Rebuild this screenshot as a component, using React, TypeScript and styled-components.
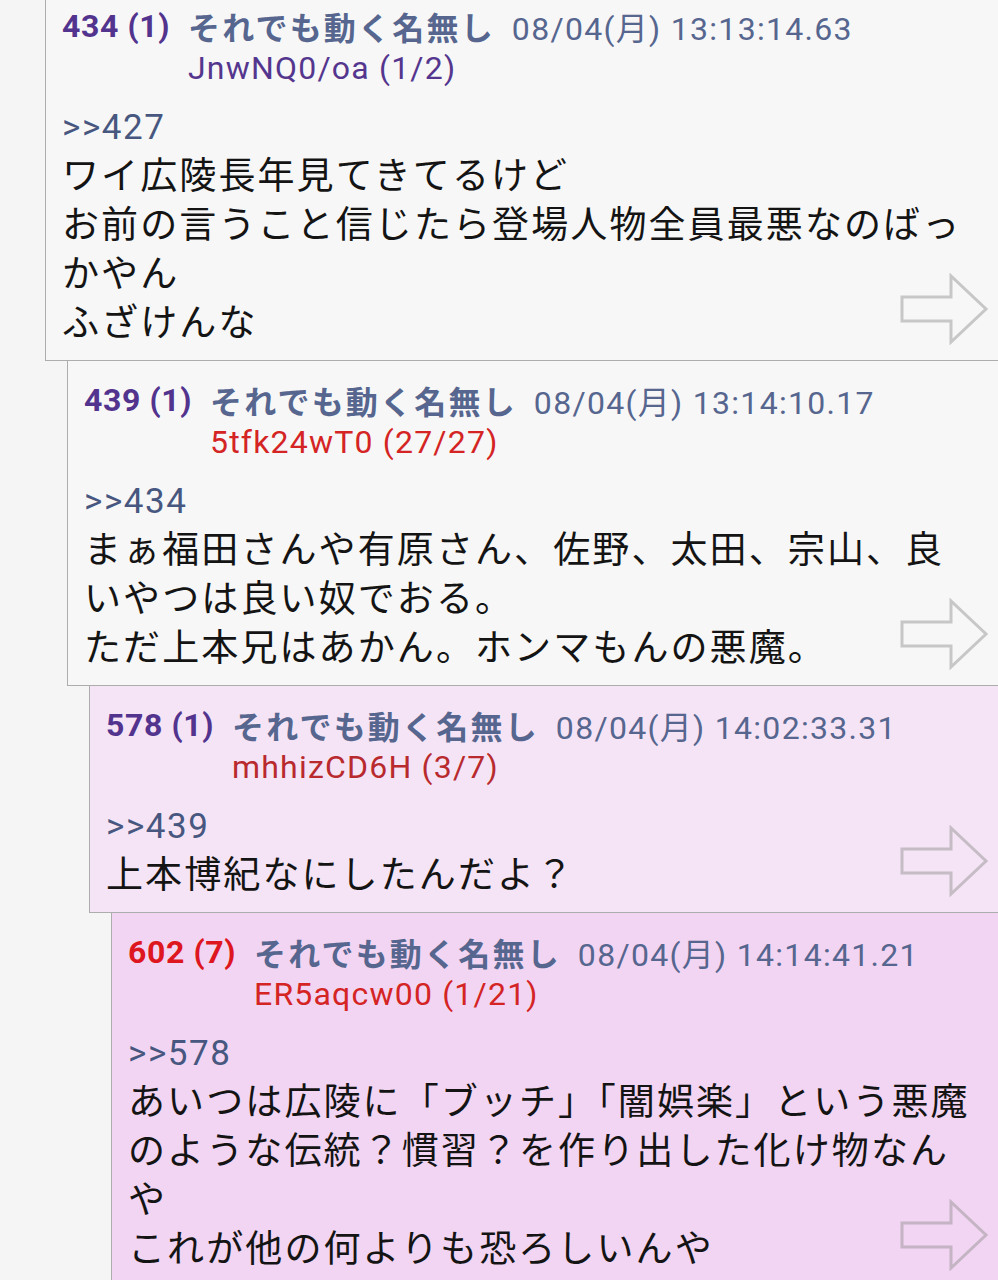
import React from "react";
import styled, { createGlobalStyle } from "styled-components";

const GlobalStyle = createGlobalStyle`
  html, body {
    margin: 0;
    padding: 0;
    background: #f5f5f5;
    overflow: hidden;
  }
  body {
    font-family: Roboto, "Noto Sans CJK JP", "Noto Sans", sans-serif;
  }
`;

const Thread = styled.main`
  display: flex;
  flex-direction: column;
  margin-top: -13px;
  width: 998px;
`;

const Post = styled.article<{ $depth: number; $bg: string }>`
  position: relative;
  margin-left: ${(p) => 45 + p.$depth * 22}px;
  background: ${(p) => p.$bg};
  border-left: 1px solid #adadad;
  border-bottom: 1px solid #adadad;
  padding: 18px 24px 12px 16px;
`;

const Header = styled.header`
  display: flex;
  align-items: flex-start;
  gap: 18px;
`;

const Number = styled.span<{ $color: string }>`
  font-family: Roboto, "Noto Sans CJK JP", sans-serif;
  font-weight: 700;
  font-size: 32px;
  letter-spacing: 0.6px;
  line-height: 42px;
  color: ${(p) => p.$color};
  white-space: nowrap;
`;

const Meta = styled.div`
  display: flex;
  flex-direction: column;
`;

const MetaLine = styled.div`
  display: flex;
  align-items: baseline;
  gap: 17px;
  height: 42px;
  line-height: 42px;
  white-space: nowrap;
`;

const Name = styled.span`
  font-family: "Noto Sans CJK JP", sans-serif;
  font-weight: 700;
  font-size: 32px;
  letter-spacing: 2.2px;
  color: #56668f;
`;

const DateText = styled.span`
  font-family: Roboto, "Noto Sans CJK JP", sans-serif;
  font-size: 32px;
  letter-spacing: 1.3px;
  color: #56668f;
`;

const Id = styled.span<{ $color: string }>`
  font-family: Roboto, sans-serif;
  font-size: 32px;
  letter-spacing: 1.2px;
  color: ${(p) => p.$color};
`;

const Body = styled.div`
  margin-top: 14px;
  display: flex;
  flex-direction: column;
`;

const Anchor = styled.div`
  font-family: Roboto, sans-serif;
  font-size: 35px;
  letter-spacing: 1.6px;
  line-height: 49px;
  color: #47577f;
`;

const Line = styled.div`
  font-family: Roboto, "Noto Sans CJK JP", sans-serif;
  font-size: 37px;
  letter-spacing: 2.1px;
  line-height: 49px;
  color: #141414;
  white-space: nowrap;
`;

const ArrowWrap = styled.div`
  position: absolute;
  right: 9px;
  bottom: 15px;
  width: 90px;
  height: 72px;
`;

const Arrow = () => (
  <ArrowWrap>
    <svg width="90" height="72" viewBox="0 0 90 72">
      <path
        d="M3 24 H52 V3 L87 36 L52 69 V48 H3 Z"
        fill="none"
        stroke="rgba(140,140,140,0.45)"
        strokeWidth="3"
        strokeLinejoin="miter"
      />
    </svg>
  </ArrowWrap>
);

type PostData = {
  no: string;
  noColor: string;
  date: string;
  id: string;
  idColor: string;
  anchor: string;
  lines: string[];
  bg: string;
};

const posts: PostData[] = [
  {
    no: "434 (1)",
    noColor: "#52338d",
    date: "08/04(月) 13:13:14.63",
    id: "JnwNQ0/oa (1/2)",
    idColor: "#55368e",
    anchor: ">>427",
    lines: [
      "ワイ広陵長年見てきてるけど",
      "お前の言うこと信じたら登場人物全員最悪なのばっ",
      "かやん",
      "ふざけんな",
    ],
    bg: "#f7f7f7",
  },
  {
    no: "439 (1)",
    noColor: "#52338d",
    date: "08/04(月) 13:14:10.17",
    id: "5tfk24wT0 (27/27)",
    idColor: "#d42424",
    anchor: ">>434",
    lines: [
      "まぁ福田さんや有原さん、佐野、太田、宗山、良",
      "いやつは良い奴でおる。",
      "ただ上本兄はあかん。ホンマもんの悪魔。",
    ],
    bg: "#f7f7f7",
  },
  {
    no: "578 (1)",
    noColor: "#52338d",
    date: "08/04(月) 14:02:33.31",
    id: "mhhizCD6H (3/7)",
    idColor: "#b82a2e",
    anchor: ">>439",
    lines: ["上本博紀なにしたんだよ？"],
    bg: "#f5e4f5",
  },
  {
    no: "602 (7)",
    noColor: "#dd1620",
    date: "08/04(月) 14:14:41.21",
    id: "ER5aqcw00 (1/21)",
    idColor: "#d42424",
    anchor: ">>578",
    lines: [
      "あいつは広陵に「ブッチ」「闇娯楽」という悪魔",
      "のような伝統？慣習？を作り出した化け物なん",
      "や",
      "これが他の何よりも恐ろしいんや",
    ],
    bg: "#f2d5f2",
  },
];

export default function App() {
  return (
    <>
      <GlobalStyle />
      <Thread>
        {posts.map((p, i) => (
          <Post key={p.no} $depth={i} $bg={p.bg}>
            <Header>
              <Number $color={p.noColor}>{p.no}</Number>
              <Meta>
                <MetaLine>
                  <Name>それでも動く名無し</Name>
                  <DateText>{p.date}</DateText>
                </MetaLine>
                <MetaLine>
                  <Id $color={p.idColor}>{p.id}</Id>
                </MetaLine>
              </Meta>
            </Header>
            <Body>
              <Anchor>{p.anchor}</Anchor>
              {p.lines.map((l, j) => (
                <Line key={j}>{l}</Line>
              ))}
            </Body>
            <Arrow />
          </Post>
        ))}
      </Thread>
    </>
  );
}
